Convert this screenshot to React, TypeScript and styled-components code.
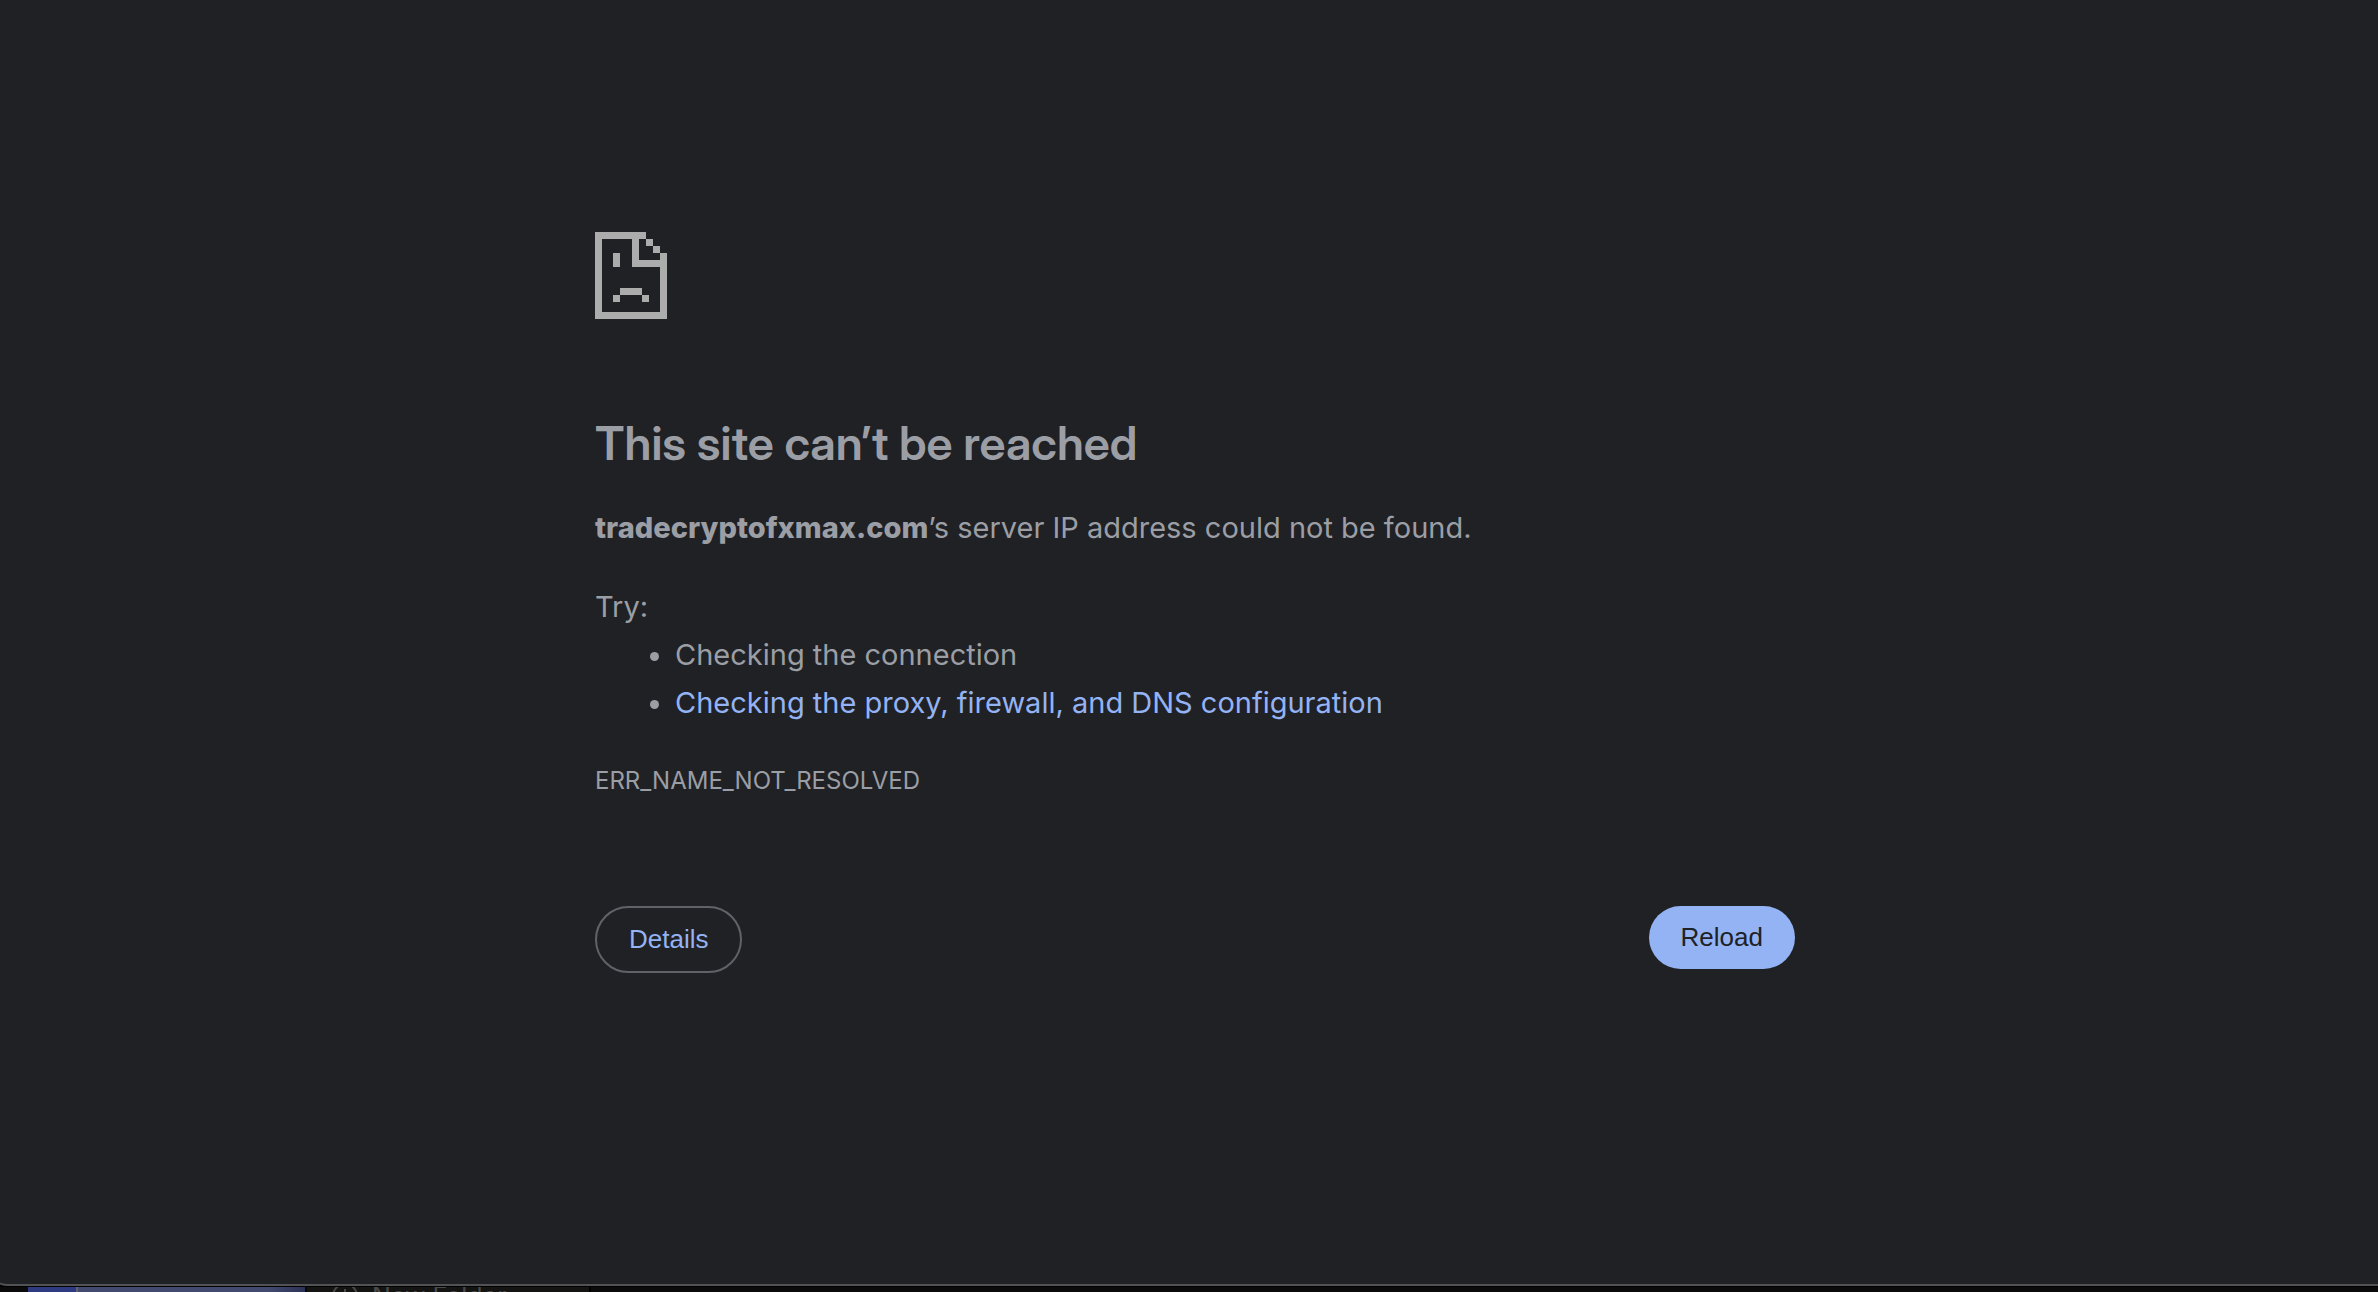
import React from "react";
import styled, { createGlobalStyle } from "styled-components";

const GlobalStyle = createGlobalStyle`
  * { box-sizing: border-box; }
  body { margin: 0; background: #0b0b0b; }
`;

const Screen = styled.div`
  min-height: 100vh;
  display: flex;
  flex-direction: column;
  overflow: hidden;
  color: #9b9ea5;
  font-family: Inter, "Liberation Sans", sans-serif;
  font-size: 29px;
  line-height: 48px;
`;

const BrowserWindow = styled.div`
  flex: 1;
  margin-left: -12px;
  padding: 232px 24px 0 48px;
  background: #202124;
  border-bottom: 2px solid #515253;
  border-bottom-left-radius: 20px;
`;

const Content = styled.main`
  max-width: 1200px;
  margin: 0 auto;
`;

const SadPage = styled.svg`
  display: block;
  width: 72px;
  height: 87px;
  fill: #acacac;
`;

const Title = styled.h1`
  margin: 94px 0 31px;
  font-family: "Inter Display", Inter, sans-serif;
  font-size: 47px;
  font-weight: 600;
  line-height: 60px;
`;

const Paragraph = styled.p`
  margin: 0;
`;

const Host = styled.strong`
  font-weight: 800;
`;

const Suggestions = styled.section`
  margin-top: 31px;
`;

const SuggestionList = styled.ul`
  margin: 0;
  padding-left: 80px;
`;

const HelpLink = styled.a`
  color: #94b3f4;
  text-decoration: none;
`;

const ErrorCode = styled.p`
  margin: 30px 0 0;
  font-size: 24px;
`;

const Actions = styled.div`
  display: flex;
  flex-wrap: wrap;
  justify-content: space-between;
  align-items: flex-start;
  margin-top: 101px;
`;

const Button = styled.button<{ $primary?: boolean }>`
  padding: 16px 32px;
  border: ${(p) => (p.$primary ? "0" : "2px solid #5f6368")};
  border-radius: 40px;
  background: ${(p) => (p.$primary ? "#94b3f4" : "transparent")};
  color: ${(p) => (p.$primary ? "#202124" : "#94b3f4")};
  font-family: "Liberation Sans", Arial, sans-serif;
  font-size: 26px;
  line-height: 31px;
  cursor: pointer;
`;

const Desktop = styled.footer`
  display: flex;
  height: 6px;
  padding-left: 28px;
  border-top: 1px solid #000;
  overflow: hidden;
  background: #0b0b0b;
`;

const Thumbnail = styled.div`
  flex: none;
  width: 279px;
  border-right: 2px solid #080808;
  background: linear-gradient(90deg, #2f3b80 0 48px, #62656f 48px 50px, #424a70 50px 240px, #2b3255);
`;

const FolderMenu = styled.div`
  display: flex;
  flex: none;
  gap: 14px;
  width: 284px;
  padding-left: 25px;
  border-right: 2px solid #000;
  background: #141412;
  color: #4b4b4a;
  font-size: 25px;
  line-height: 18px;
  white-space: nowrap;
`;

const PlusIcon = styled.svg`
  flex: none;
  width: 26px;
  height: 26px;
  margin-top: -4px;
  fill: none;
  stroke: currentColor;
  stroke-width: 2;
`;

export default function App() {
  return (
    <Screen>
      <GlobalStyle />
      <BrowserWindow>
        <Content>
          <SadPage viewBox="0 0 72 87" shapeRendering="crispEdges" aria-hidden="true">
            <path
              fillRule="evenodd"
              d="M0 0H51V7H44V28H65V21H72V87H0ZM7 7V80H65V35H37V7Z"
            />
            <path d="M51 7H58V14H51ZM58 14H65V21H58ZM18 21H25V35H18ZM25 56H47V63H25ZM18 63H25V70H18ZM47 63H54V70H47Z" />
          </SadPage>
          <Title>This site can’t be reached</Title>
          <Paragraph>
            <Host>tradecryptofxmax.com</Host>’s server IP address could not be found.
          </Paragraph>
          <Suggestions>
            <Paragraph>Try:</Paragraph>
            <SuggestionList>
              <li>Checking the connection</li>
              <li>
                <HelpLink href="#network">Checking the proxy, firewall, and DNS configuration</HelpLink>
              </li>
            </SuggestionList>
          </Suggestions>
          <ErrorCode>ERR_NAME_NOT_RESOLVED</ErrorCode>
          <Actions>
            <Button type="button">Details</Button>
            <Button type="button" $primary>Reload</Button>
          </Actions>
        </Content>
      </BrowserWindow>
      <Desktop>
        <Thumbnail />
        <FolderMenu>
          <PlusIcon viewBox="0 0 26 26" aria-hidden="true">
            <circle cx="13" cy="13" r="12" />
            <path d="M13 6V20M6 13H20" />
          </PlusIcon>
          <span>New Folder</span>
        </FolderMenu>
      </Desktop>
    </Screen>
  );
}
